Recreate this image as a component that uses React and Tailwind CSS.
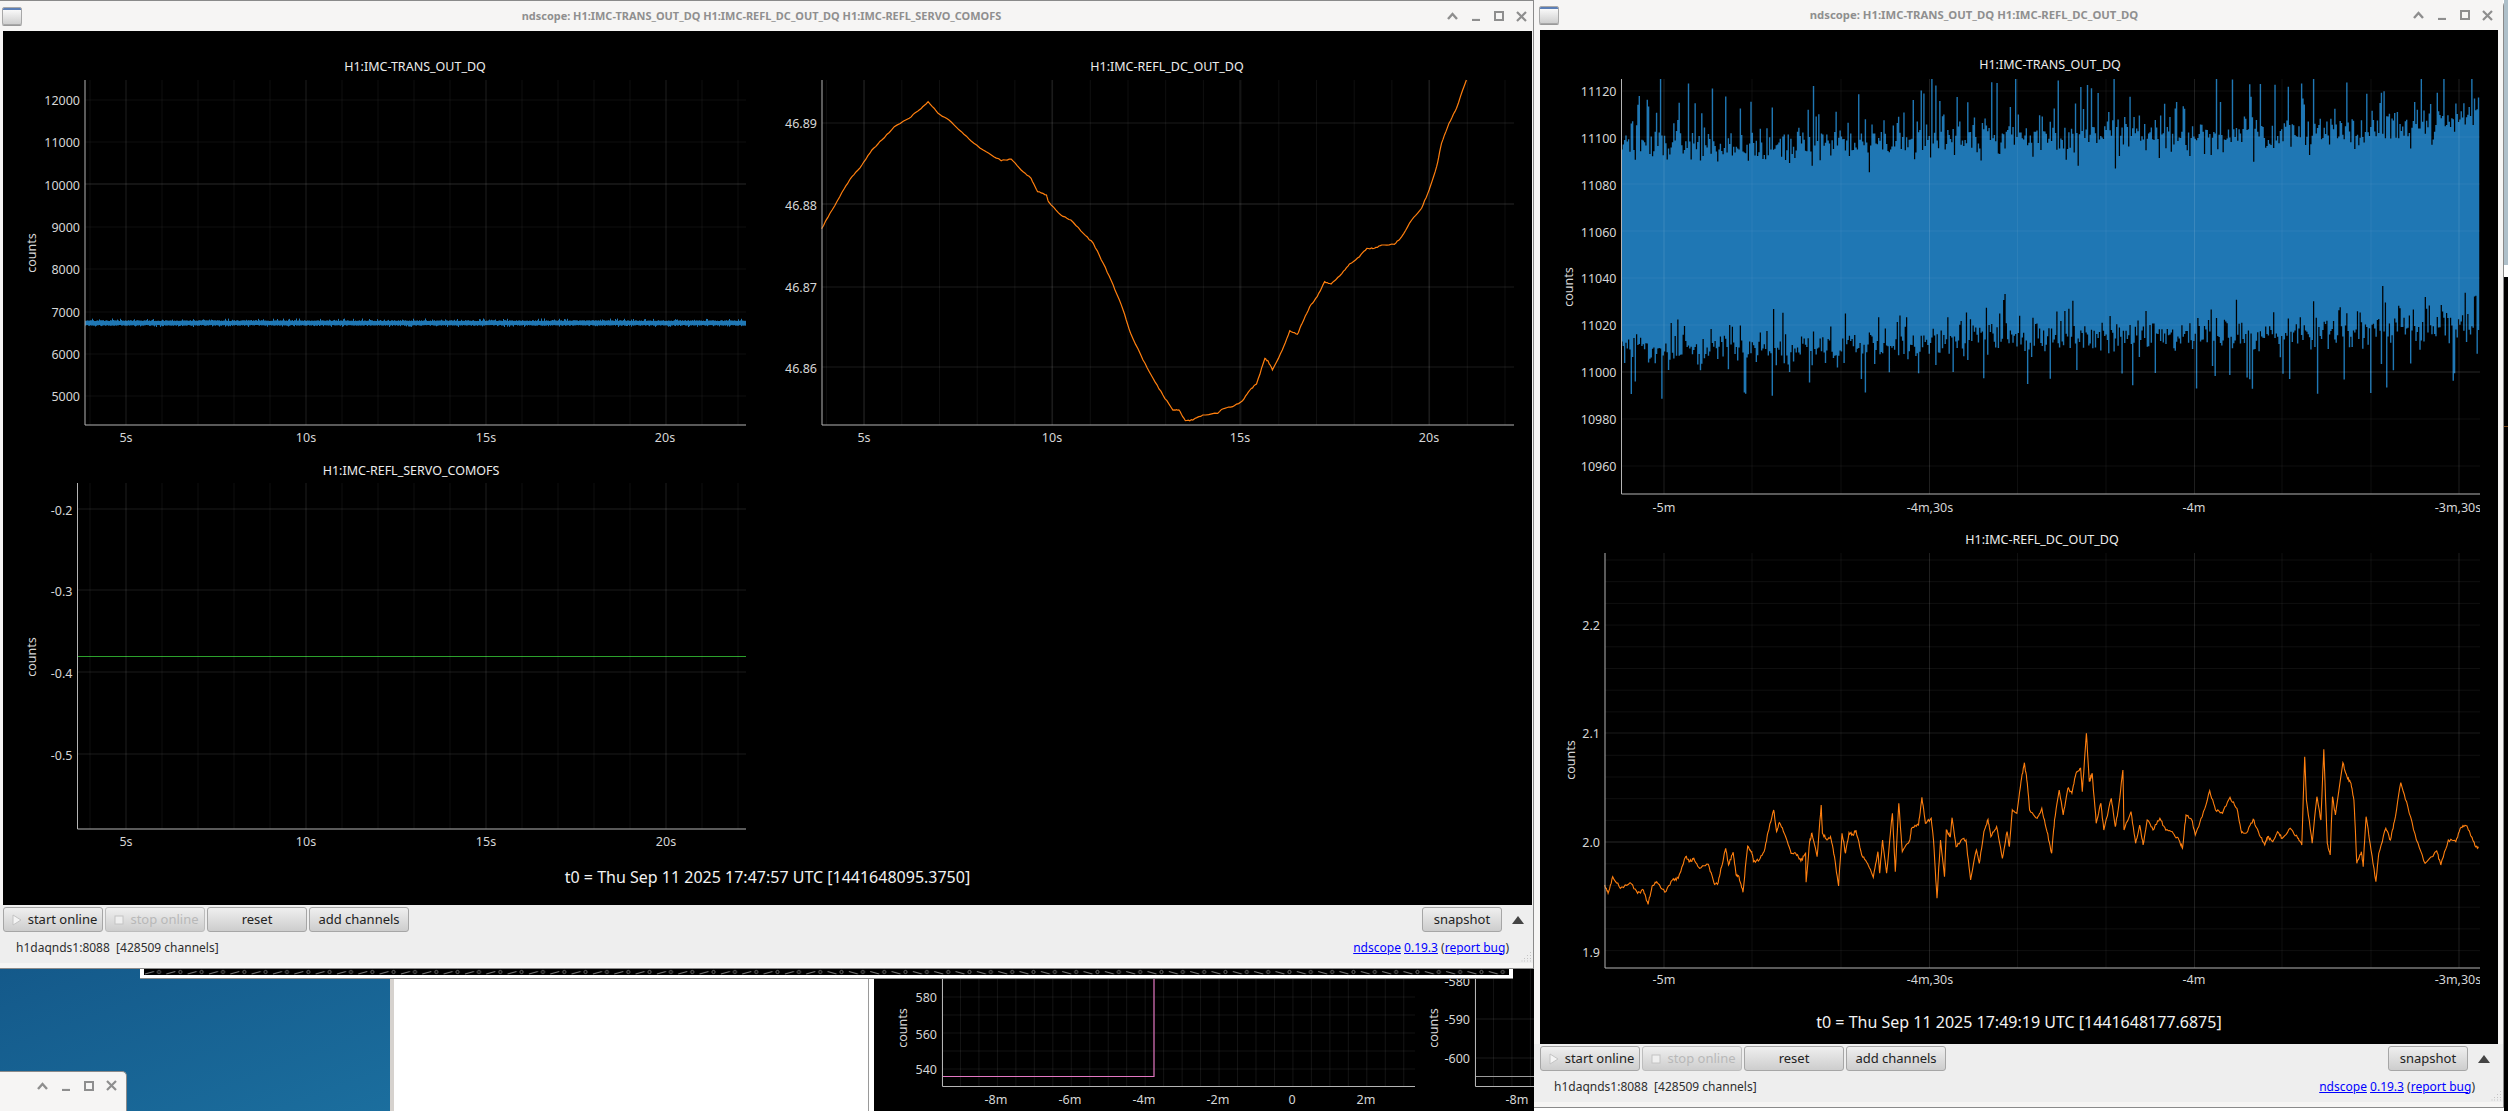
import React from "react";

function makeRng(seed) {
  let a = seed >>> 0;
  return () => {
    a = (a + 0x6d2b79f5) | 0;
    let t = Math.imul(a ^ (a >>> 15), 1 | a);
    t = (t + Math.imul(t ^ (t >>> 7), 61 | t)) ^ t;
    return ((t ^ (t >>> 14)) >>> 0) / 4294967296;
  };
}

function range(start, end, step) {
  const out = [];
  for (let v = start; v <= end + 0.01; v += step) out.push(v);
  return out;
}

function jitterPath(points, sub, amp, seed) {
  const r = makeRng(seed);
  let d = `M${points[0][0].toFixed(1)} ${points[0][1].toFixed(1)}`;
  for (let i = 1; i < points.length; i++) {
    const [x0, y0] = points[i - 1];
    const [x1, y1] = points[i];
    for (let k = 1; k <= sub; k++) {
      const f = k / sub;
      const n = k === sub ? 0 : (r() - 0.5) * 2 * amp;
      d += `L${(x0 + (x1 - x0) * f).toFixed(1)} ${(y0 + (y1 - y0) * f + n).toFixed(1)}`;
    }
  }
  return d;
}

const reflA = [[144,506],[165,450],[190,385],[205,350],[225,315],[245,270],[265,240],[290,200],[320,175],[340,150],[358,125],[378,160],[400,180],[425,215],[450,250],[480,280],[505,302],[525,297],[545,330],[565,355],[578,395],[596,405],[600,425],[625,465],[645,480],[670,520],[690,550],[710,610],[730,675],[750,750],[765,820],[790,900],[810,955],[830,1005],[850,1050],[862,1050],[875,1082],[890,1080],[910,1065],[940,1060],[950,1047],[970,1040],[990,1022],[1005,990],[1018,972],[1035,895],[1042,905],[1050,930],[1070,870],[1085,812],[1100,823],[1110,790],[1125,740],[1140,710],[1155,665],[1168,672],[1190,640],[1205,612],[1225,590],[1240,565],[1255,565],[1270,555],[1295,553],[1310,530],[1330,480],[1350,445],[1365,390],[1380,320],[1390,250],[1405,190],[1420,145],[1440,60]]
  .map(([x, y]) => [750 + x / 2.01, 60 + y / 3]);

const reflB = [[8,735],[14,760],[22,710],[35,745],[52,728],[65,760],[75,750],[83,793],[90,738],[98,725],[112,757],[125,720],[135,715],[148,650],[155,665],[162,655],[172,685],[187,673],[197,730],[203,733],[210,680],[217,625],[222,675],[230,637],[235,705],[240,710],[247,757],[255,618],[262,635],[265,665],[275,660],[285,625],[290,578],[300,510],[305,575],[310,548],[320,587],[330,640],[338,640],[347,663],[355,640],[356,727],[362,605],[366,580],[375,650],[382,495],[384,580],[392,600],[398,590],[405,650],[412,738],[418,580],[424,640],[430,578],[437,585],[442,570],[452,645],[462,670],[472,712],[480,635],[483,700],[488,600],[495,700],[505,520],[510,695],[516,490],[522,635],[535,600],[538,565],[550,555],[556,472],[562,550],[572,535],[576,600],[582,775],[588,600],[595,710],[598,570],[605,590],[608,533],[615,620],[625,598],[632,600],[640,720],[650,630],[655,670],[663,575],[670,538],[675,590],[685,560],[695,655],[703,575],[707,620],[712,510],[720,520],[727,425],[733,368],[738,430],[742,510],[755,535],[763,505],[772,575],[780,640],[785,540],[793,450],[800,525],[808,445],[815,460],[822,400],[830,385],[833,455],[840,280],[845,425],[850,400],[857,550],[865,490],[870,570],[883,475],[890,560],[895,510],[903,390],[905,570],[917,515],[925,610],[932,555],[938,615],[945,540],[955,570],[967,535],[977,570],[990,580],[1000,600],[1006,625],[1012,525],[1022,540],[1028,585],[1040,530],[1053,452],[1063,510],[1075,520],[1088,472],[1100,505],[1108,578],[1117,578],[1128,538],[1137,575],[1148,615],[1153,590],[1162,605],[1170,575],[1178,595],[1192,565],[1205,595],[1212,615],[1217,350],[1220,480],[1230,610],[1238,470],[1245,540],[1250,328],[1256,610],[1261,645],[1265,470],[1270,525],[1283,368],[1290,410],[1297,430],[1302,480],[1307,670],[1315,635],[1318,680],[1323,530],[1330,610],[1340,725],[1345,640],[1357,565],[1365,600],[1372,545],[1383,428],[1395,500],[1410,600],[1425,670],[1445,633],[1452,675],[1465,600],[1478,605],[1487,562],[1497,557],[1505,590],[1512,620],[1517,625]]
  .map(([x, y]) => [1600 + x / 1.727, 640 + y / 3]);

function bandNoise() {
  const r = makeRng(7);
  let d = "";
  for (let x = 85.5; x < 746; x += 1) {
    const a = 321 - (r() < 0.2 ? r() * 2.5 : r() * 0.8);
    const b = 325 + (r() < 0.2 ? r() * 2 : r() * 0.8);
    d += `M${x} ${a.toFixed(1)}V${b.toFixed(1)}`;
  }
  return d;
}

function bigNoise() {
  const r = makeRng(42);
  const g = () => (r() + r() + r() - 1.5) * 2;
  let d = "";
  for (let x = 1622; x < 2479.5; x += 1.33) {
    const t = (x - 1622) / 857;
    const T = 143 - 8 * t - 22 * t * t * t * t + 3 * Math.sin(9 * t);
    const B = 350 - 22 * t + 3 * Math.sin(11 * t);
    let n = g() * 8;
    let u = r();
    if (u < 0.2) n -= r() * 55;
    else if (u < 0.32) n += r() * 24;
    let m = g() * 8;
    u = r();
    if (u < 0.14) m += r() * 50;
    else if (u < 0.3) m -= r() * 32;
    const top = Math.max(79, T + n);
    const bot = Math.min(425, B + m);
    d += `M${x.toFixed(2)} ${top.toFixed(1)}V${bot.toFixed(1)}`;
  }
  return d;
}

const pathReflA = jitterPath(reflA, 5, 0.6, 3);
const pathReflB = jitterPath(reflB, 6, 1.4, 5);
const pathBand = bandNoise();
const pathBig = bigNoise();

function Plot({ x0, y0, w, h, left, right, top, bottom, title, titleX, titleY, vMinor, vMajor, hMinor, hMajor, hBright, xTicks, yTicks, countsX, countsY, labelY, children, clipId }) {
  return (
    <svg viewBox={`${x0} ${y0} ${w} ${h}`} width={w} height={h} className="block shrink-0 text-[12.5px]">
      {children}
      {vMinor.map((x) => <line key={`a${x}`} x1={x} x2={x} y1={top} y2={bottom} stroke="#ffffff" strokeOpacity="0.06" />)}
      {vMajor.map((x) => <line key={`b${x}`} x1={x} x2={x} y1={top} y2={bottom} stroke="#ffffff" strokeOpacity="0.12" />)}
      {hMinor.map((y) => <line key={`c${y}`} x1={left} x2={right} y1={y} y2={y} stroke="#ffffff" strokeOpacity="0.06" />)}
      {hMajor.map((y) => <line key={`d${y}`} x1={left} x2={right} y1={y} y2={y} stroke="#ffffff" strokeOpacity="0.1" />)}
      {hBright.map((y) => <line key={`e${y}`} x1={left} x2={right} y1={y} y2={y} stroke="#ffffff" strokeOpacity="0.16" />)}
      <line x1={left} x2={left} y1={top} y2={bottom} stroke="#b4b4b4" />
      <line x1={left} x2={right} y1={bottom} y2={bottom} stroke="#b4b4b4" />
      <text x={titleX} y={titleY} textAnchor="middle" dominantBaseline="central" className="fill-[#ececec]">{title}</text>
      {yTicks.map(([y, t]) => (
        <text key={t} x={left - 5} y={y} textAnchor="end" dominantBaseline="central" className="fill-[#d6d6d6]">{t}</text>
      ))}
      <clipPath id={clipId}><rect x={left - 60} y={bottom} width={right - left + 60} height={40} /></clipPath>
      <g clipPath={`url(#${clipId})`}>
        {xTicks.map(([x, t]) => (
          <text key={t} x={x} y={labelY} textAnchor="middle" dominantBaseline="central" className="fill-[#d6d6d6]">{t}</text>
        ))}
      </g>
      <text x={countsX} y={countsY} transform={`rotate(-90 ${countsX} ${countsY})`} textAnchor="middle" dominantBaseline="central" className="fill-[#d6d6d6]">counts</text>
    </svg>
  );
}

function WindowIcon() {
  return (
    <div className="h-[18px] w-[20px] shrink-0 overflow-hidden rounded-[2px] border border-[#a8a8a8] bg-linear-to-b from-[#ffffff] to-[#cfcfcf] shadow-[0_1px_0_#999]">
      <div className="h-[2px] bg-[#5c7fb6]" />
    </div>
  );
}

function TitleButtons({ className = "" }) {
  const cell = "flex w-[23px] items-center justify-center";
  return (
    <div className={`flex shrink-0 items-center ${className}`}>
      <div className={cell}><svg width="11" height="8" viewBox="0 0 11 8"><path d="M1 7 L5.5 2 L10 7" fill="none" stroke="#8e8e8e" strokeWidth="2.4" /></svg></div>
      <div className={cell}><svg width="10" height="10" viewBox="0 0 10 10"><path d="M1 9 H9" fill="none" stroke="#8e8e8e" strokeWidth="2.2" /></svg></div>
      <div className={cell}><svg width="10" height="10" viewBox="0 0 10 10"><rect x="1" y="1" width="8" height="8" fill="none" stroke="#8e8e8e" strokeWidth="2" /></svg></div>
      <div className={cell}><svg width="11" height="11" viewBox="0 0 11 11"><path d="M1 1 L10 10 M10 1 L1 10" fill="none" stroke="#8e8e8e" strokeWidth="2.2" /></svg></div>
    </div>
  );
}

function TitleBar({ title, heightClass, titleClass, buttonsClass }) {
  return (
    <div className={`flex shrink-0 items-center bg-[#f6f5f4] ${heightClass}`}>
      <WindowIcon />
      <div className={`flex-1 whitespace-nowrap text-center font-bold text-[#8f8f8f] ${titleClass}`}>{title}</div>
      <TitleButtons className={buttonsClass} />
    </div>
  );
}

const btn = "flex h-[25px] items-center justify-center rounded-[3px] border border-[#a6a6a6] bg-linear-to-b from-[#efefef] to-[#cdcdcd] text-[13px] leading-none";

function Toolbar({ className }) {
  return (
    <div className={`flex shrink-0 items-center justify-between bg-[#eeeeee] pt-[2px] ${className}`}>
      <div className="flex gap-[2px]">
        <div className={`${btn} w-[100px] gap-[6px] pl-[3px] text-[#222222]`}>
          <svg width="10" height="12" viewBox="0 0 10 12"><path d="M1 1 L9 6 L1 11 Z" fill="#f4f4f4" stroke="#c4c4c4" /></svg>
          start online
        </div>
        <div className={`${btn} w-[100px] gap-[6px] pl-[3px] border-[#bdbdbd] text-[#b8b8b8]`}>
          <svg width="10" height="10" viewBox="0 0 10 10"><rect x="1" y="1" width="8" height="8" fill="#efefef" stroke="#c4c4c4" /></svg>
          stop online
        </div>
        <div className={`${btn} w-[100px] text-[#222222]`}>reset</div>
        <div className={`${btn} w-[100px] text-[#222222]`}>add channels</div>
      </div>
      <div className="flex items-center gap-[10px]">
        <div className={`${btn} w-[80px] text-[#222222]`}>snapshot</div>
        <svg width="12" height="8" viewBox="0 0 12 8"><path d="M6 0 L12 8 H0 Z" fill="#444444" /></svg>
      </div>
    </div>
  );
}

function StatusBar({ className }) {
  return (
    <div className={`relative flex h-[31px] shrink-0 items-center justify-between bg-[#eeeeee] text-[12px] text-[#2e2e2e] ${className}`}>
      <span className="whitespace-pre">h1daqnds1:8088  [428509 channels]</span>
      <span className="whitespace-pre">
        <span className="text-[#0000ff] underline">ndscope</span>{" "}
        <span className="text-[#0000ff] underline">0.19.3</span>{" "}
        (<span className="text-[#0000ff] underline">report bug</span>)
      </span>
      <svg width="11" height="11" viewBox="0 0 11 11" className="absolute right-[1px] bottom-[1px]">
        {[[9,1],[6,4],[9,4],[3,7],[6,7],[9,7],[0.5,9.5],[3,9.5],[6,9.5],[9,9.5]].map(([x, y]) => (
          <rect key={`${x}-${y}`} x={x} y={y} width="1" height="1" fill="#c4c4c4" />
        ))}
      </svg>
    </div>
  );
}

const w1V = range(90, 740, 36).filter((x) => Math.abs((x - 126) % 180) > 1);
const w1Maj = [126, 306, 486, 666];
const xLabels = [[126, "5s"], [306, "10s"], [486, "15s"], [666, "20s"]];

function WindowOne() {
  return (
    <div className="absolute top-0 left-0 flex h-[969px] w-[1534px] flex-col border-t border-r border-b border-[#8a8a8a] bg-[#f6f5f4]">
      <TitleBar
        title="ndscope: H1:IMC-TRANS_OUT_DQ H1:IMC-REFL_DC_OUT_DQ H1:IMC-REFL_SERVO_COMOFS"
        heightClass="h-[30px] pl-[2px]"
        titleClass="pl-[60px] text-[10.95px]"
        buttonsClass=""
      />
      <div className="ml-[3px] flex h-[874px] w-[1529px] shrink-0 flex-col bg-black">
        <div className="flex">
          <Plot x0={3} y0={31} w={765} h={424} left={85} right={746} top={80} bottom={425} title="H1:IMC-TRANS_OUT_DQ" titleX={415} titleY={66}
            vMinor={w1V} vMajor={w1Maj} hMinor={[100,142,227,269,312,354,396]} hMajor={[]} hBright={[184]}
            xTicks={[[126,"5s"],[306,"10s"],[486,"15s"],[665,"20s"]]}
            yTicks={[[100,"12000"],[142,"11000"],[185,"10000"],[227,"9000"],[269,"8000"],[312,"7000"],[354,"6000"],[396,"5000"]]}
            countsX={31} countsY={253} labelY={437} clipId="c1">
            <path d={pathBand} stroke="#1f77b4" fill="none" />
          </Plot>
          <Plot x0={768} y0={31} w={764} h={424} left={822} right={1514} top={80} bottom={425} title="H1:IMC-REFL_DC_OUT_DQ" titleX={1167} titleY={66}
            vMinor={range(826.4, 1510, 37.7)} vMajor={[864,1052,1240,1429]} hMinor={[]} hMajor={[123,287,367]} hBright={[204]}
            xTicks={[[864,"5s"],[1052,"10s"],[1240,"15s"],[1429,"20s"]]}
            yTicks={[[123,"46.89"],[205,"46.88"],[287,"46.87"],[368,"46.86"]]}
            countsX={762} countsY={253} labelY={437} clipId="c2">
            <path d={pathReflA} stroke="#ff7f0e" strokeWidth="1.2" fill="none" />
          </Plot>
        </div>
        <Plot x0={3} y0={455} w={765} h={402} left={77.5} right={746} top={483} bottom={829} title="H1:IMC-REFL_SERVO_COMOFS" titleX={411} titleY={470}
          vMinor={w1V} vMajor={w1Maj} hMinor={[]} hMajor={[509,590,672,754]} hBright={[]}
          xTicks={xLabels}
          yTicks={[[510,"-0.2"],[591,"-0.3"],[673,"-0.4"],[755,"-0.5"]]}
          countsX={31} countsY={657} labelY={841} clipId="c3">
          <line x1={77.5} x2={746} y1={656.5} y2={656.5} stroke="#2ca02c" strokeWidth="1.2" />
        </Plot>
        <div className="flex flex-1 items-center justify-center pb-[8px] text-[16px] text-[#f2f2f2]">t0 = Thu Sep 11 2025 17:47:57 UTC [1441648095.3750]</div>
      </div>
      <Toolbar className="pr-[9px] pl-[3px]" />
      <StatusBar className="pr-[24px] pl-[16px]" />
    </div>
  );
}

const w2V = [1752, 1841, 2017.5, 2106, 2282, 2371];
const w2Maj = [1664, 1929.5, 2194.5, 2459];
const w2Labels = [[1664,"-5m"],[1930,"-4m,30s"],[2194,"-4m"],[2458,"-3m,30s"]];

function WindowTwo() {
  return (
    <div className="absolute top-0 left-[1534px] flex h-[1108px] w-[970px] flex-col rounded-tr-[6px] border-r border-b border-[#8a8a8a] bg-[#f6f5f4]">
      <TitleBar
        title="ndscope: H1:IMC-TRANS_OUT_DQ H1:IMC-REFL_DC_OUT_DQ"
        heightClass="h-[30px] pl-[5px]"
        titleClass="pr-[18px] text-[11.3px]"
        buttonsClass="pr-[4px]"
      />
      <div className="ml-[6px] flex h-[1014px] w-[958px] shrink-0 flex-col bg-black">
        <Plot x0={1540} y0={30} w={958} h={490} left={1621.5} right={2480} top={79} bottom={494} title="H1:IMC-TRANS_OUT_DQ" titleX={2050} titleY={64}
          vMinor={w2V} vMajor={w2Maj} hMinor={[91,137,184,231,278,325,419,466]} hMajor={[]} hBright={[372]}
          xTicks={w2Labels}
          yTicks={[[91,"11120"],[138,"11100"],[185,"11080"],[232,"11060"],[278,"11040"],[325,"11020"],[372,"11000"],[419,"10980"],[466,"10960"]]}
          countsX={1568} countsY={287} labelY={507} clipId="c4">
          <path d={pathBig} stroke="#1f77b4" strokeWidth="1.4" fill="none" />
        </Plot>
        <Plot x0={1540} y0={520} w={958} h={480} left={1605} right={2480} top={553} bottom={968} title="H1:IMC-REFL_DC_OUT_DQ" titleX={2042} titleY={539}
          vMinor={w2V} vMajor={w2Maj} hMinor={range(560, 965, 21.7).filter((y) => Math.abs(y - 842) > 2 && Math.abs(y - 733) > 2)} hMajor={[733]} hBright={[842]}
          xTicks={w2Labels}
          yTicks={[[625,"2.2"],[733,"2.1"],[842,"2.0"],[952,"1.9"]]}
          countsX={1570} countsY={760} labelY={979} clipId="c5">
          <path d={pathReflB} stroke="#ff7f0e" strokeWidth="1.1" fill="none" />
        </Plot>
        <div className="flex flex-1 items-center justify-center text-[16px] text-[#f2f2f2]">t0 = Thu Sep 11 2025 17:49:19 UTC [1441648177.6875]</div>
      </div>
      <Toolbar className="pr-[13px] pl-[6px]" />
      <StatusBar className="pr-[28px] pl-[20px]" />
    </div>
  );
}

function BackgroundPlots() {
  const minorV = range(942, 1415, 18.47);
  const minorH = range(979, 1086, 18);
  return (
    <div className="absolute top-[968px] left-[874px] h-[143px] w-[660px] bg-black">
      <svg viewBox="874 968 660 143" width="660" height="143" className="block text-[12.5px]">
        {minorV.map((x) => <line key={x} x1={x} x2={x} y1={968} y2={1086} stroke="#ffffff" strokeOpacity="0.08" />)}
        {minorH.map((y) => <line key={y} x1={942} x2={1415} y1={y} y2={y} stroke="#ffffff" strokeOpacity="0.07" />)}
        {range(1475, 1534, 18.47).map((x) => <line key={x} x1={x} x2={x} y1={968} y2={1086} stroke="#ffffff" strokeOpacity="0.08" />)}
        {[1019, 1058].map((y) => <line key={y} x1={1475} x2={1534} y1={y} y2={y} stroke="#ffffff" strokeOpacity="0.1" />)}
        <path d="M942 1076.5 H1154 V968" stroke="#e377c2" strokeWidth="1.2" fill="none" />
        <line x1={1475} x2={1534} y1={1076.5} y2={1076.5} stroke="#9a9a9a" />
        <path d="M942.5 968 V1086.5 H1415" stroke="#b4b4b4" fill="none" />
        <path d="M1475.5 968 V1086.5 H1534" stroke="#b4b4b4" fill="none" />
        {[[997,"580"],[1034,"560"],[1069,"540"]].map(([y, t]) => (
          <text key={t} x={937} y={y} textAnchor="end" dominantBaseline="central" className="fill-[#d6d6d6]">{t}</text>
        ))}
        {[[981,"-580"],[1019,"-590"],[1058,"-600"]].map(([y, t]) => (
          <text key={t} x={1470} y={y} textAnchor="end" dominantBaseline="central" className="fill-[#d6d6d6]">{t}</text>
        ))}
        {[[996,"-8m"],[1070,"-6m"],[1144,"-4m"],[1218,"-2m"],[1292,"0"],[1366,"2m"],[1517,"-8m "]].map(([x, t]) => (
          <text key={t} x={x} y={1099} textAnchor="middle" dominantBaseline="central" className="fill-[#d6d6d6]">{t.trim()}</text>
        ))}
        <text x={902} y={1028} transform="rotate(-90 902 1028)" textAnchor="middle" dominantBaseline="central" className="fill-[#d6d6d6]">counts</text>
        <text x={1433} y={1028} transform="rotate(-90 1433 1028)" textAnchor="middle" dominantBaseline="central" className="fill-[#d6d6d6]">counts</text>
      </svg>
    </div>
  );
}

function StripeWindow() {
  return (
    <div className="absolute top-[968px] left-[140px] h-[11px] w-[1373px] border-b border-[#8a8a8a] bg-white px-[4px] pb-[3px]">
      <svg width="1365" height="7" className="block bg-black">
        <defs>
          <pattern id="stripeA" width="21.33" height="7" patternUnits="userSpaceOnUse">
            <path d="M1 6 L10 3.5" stroke="#777777" strokeWidth="1" />
            <circle cx="15" cy="4" r="1.6" fill="none" stroke="#777777" strokeWidth="0.8" />
          </pattern>
          <pattern id="stripeB" width="21.33" height="7" patternUnits="userSpaceOnUse">
            <path d="M1 3.5 L10 6" stroke="#777777" strokeWidth="1" />
            <circle cx="15" cy="4" r="1.6" fill="none" stroke="#777777" strokeWidth="0.8" />
          </pattern>
        </defs>
        <rect x="0" y="0" width="680" height="7" fill="url(#stripeA)" />
        <rect x="680" y="0" width="685" height="7" fill="url(#stripeB)" />
      </svg>
    </div>
  );
}

function SmallWindow() {
  return (
    <div className="absolute top-[1071px] left-0 flex h-[40px] w-[127px] items-start justify-end rounded-tr-[5px] border-t border-r border-[#8a8a8a] bg-[#f6f5f4] pt-[8px] pr-[3px]">
      <TitleButtons />
    </div>
  );
}

function RightSliver() {
  return (
    <div className="absolute top-0 left-[2504px] flex h-[1111px] w-[4px] flex-col bg-black">
      <div className="h-[265px] bg-[#aebfc9]" />
      <div className="h-[12px] bg-white" />
      <div className="mt-[149px] h-[1px] bg-[#7a4a1c]" />
    </div>
  );
}

export default function App() {
  return (
    <div className="relative h-[1111px] w-[2508px] overflow-hidden bg-white font-['Noto_Sans',sans-serif]">
      <div className="absolute top-[968px] left-0 h-[143px] w-[390px] bg-linear-to-br from-[#14598a] to-[#1b6e9e]" />
      <div className="absolute top-[968px] left-[390px] h-[143px] w-[484px] border-l-4 border-[#d6d2ce] bg-white">
        <div className="ml-[474px] h-full w-px bg-[#9a9a9a]" />
      </div>
      <BackgroundPlots />
      <StripeWindow />
      <SmallWindow />
      <RightSliver />
      <WindowTwo />
      <WindowOne />
    </div>
  );
}
